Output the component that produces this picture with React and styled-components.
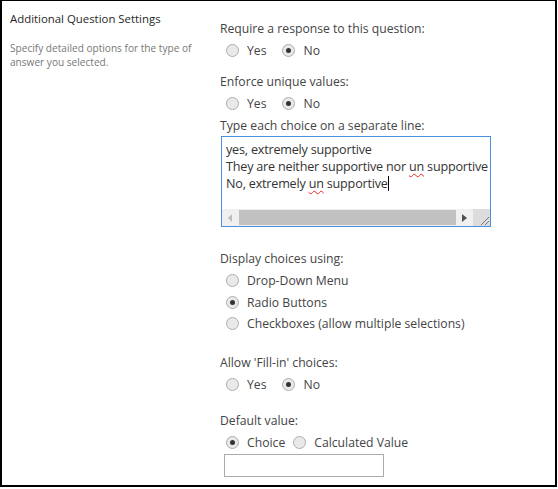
import React from "react";
import styled, { createGlobalStyle } from "styled-components";

const Global = createGlobalStyle`
  html, body { margin: 0; padding: 0; background: #fff; }
  body { font-family: "Open Sans", "Noto Sans", sans-serif; color: #444; }
`;

const Frame = styled.div`
  box-sizing: border-box;
  width: 557px;
  height: 487px;
  border-top: 1px solid #000;
  border-left: 2px solid #000;
  border-right: 2px solid #000;
  border-bottom: 2px solid #000;
  display: grid;
  grid-template-columns: 218px 1fr;
  overflow: hidden;
`;

const Side = styled.div`
  padding: 9px 0 0 8px;
`;

const SideTitle = styled.div`
  font-size: 11.4px;
  color: #262626;
  line-height: 18px;
`;

const SideDesc = styled.div`
  margin-top: 13px;
  font-size: 10.1px;
  color: #777;
  line-height: 14px;
  width: 190px;
`;

const Main = styled.div`
  padding-top: 18px;
  display: flex;
  flex-direction: column;
`;

const Label = styled.div`
  font-size: 12.2px;
  line-height: 20px;
  color: #444;
  margin-top: ${(p) => p.$gap || 0}px;
`;

const Row = styled.div`
  display: flex;
  align-items: center;
  height: ${(p) => p.$h || 23}px;
  margin-top: ${(p) => p.$mt || 0}px;
  padding-left: 6px;
`;

const Option = styled.div`
  display: flex;
  align-items: center;
  font-size: 12.2px;
  color: #444;
  margin-right: ${(p) => p.$mr || 0}px;
`;

const Radio = styled.span`
  box-sizing: border-box;
  width: 13px;
  height: 13px;
  border-radius: 50%;
  border: 1px solid #adadad;
  background: #e9e9e9;
  margin-right: 8px;
  display: inline-flex;
  align-items: center;
  justify-content: center;
  &::after {
    content: "";
    width: 5px;
    height: 5px;
    border-radius: 50%;
    background: ${(p) => (p.$on ? "#333" : "transparent")};
  }
`;

const TextBox = styled.div`
  box-sizing: border-box;
  margin-left: 1px;
  width: 270px;
  height: 91px;
  border: 1px solid #4a90e2;
  display: flex;
  flex-direction: column;
  background: #fff;
`;

const TextLines = styled.div`
  flex: 1;
  padding: 4px 0 0 4px;
  font-size: 12.6px;
  letter-spacing: -0.2px;
  line-height: 17px;
  color: #333;
  white-space: nowrap;
  overflow: hidden;
`;

const Squiggle = styled.span`
  text-decoration: underline wavy #e22;
  text-decoration-thickness: 1px;
  text-underline-offset: 2px;
`;

const Caret = styled.span`
  display: inline-block;
  width: 1px;
  height: 15px;
  background: #000;
  vertical-align: -3px;
`;

const ScrollBar = styled.div`
  height: 17px;
  display: flex;
  background: #f0f0f0;
`;

const ArrowBtn = styled.div`
  width: 17px;
  height: 17px;
  display: flex;
  align-items: center;
  justify-content: center;
`;

const Thumb = styled.div`
  flex: 1;
  margin: 1px 0;
  background: #c1c1c1;
`;

const Corner = styled.div`
  width: 17px;
  height: 17px;
  background: #dcdcdc;
  display: flex;
  align-items: flex-end;
  justify-content: flex-end;
`;

const SmallInput = styled.div`
  box-sizing: border-box;
  width: 160px;
  height: 23px;
  border: 1px solid #ababab;
  margin: 0 0 0 4px;
`;

const YesNo = ({ no }) => (
  <Row>
    <Option $mr={16}>
      <Radio $on={!no} />
      Yes
    </Option>
    <Option>
      <Radio $on={no} />
      No
    </Option>
  </Row>
);

export default function App() {
  return (
    <>
      <Global />
      <Frame>
        <Side>
          <SideTitle>Additional Question Settings</SideTitle>
          <SideDesc>Specify detailed options for the type of answer you selected.</SideDesc>
        </Side>
        <Main>
          <Label>Require a response to this question:</Label>
          <YesNo no />
          <Label $gap={10}>Enforce unique values:</Label>
          <YesNo no />
          <Label $gap={1}>Type each choice on a separate line:</Label>
          <TextBox>
            <TextLines>
              <div>yes, extremely supportive</div>
              <div>
                They are neither supportive nor <Squiggle>un</Squiggle> supportive
              </div>
              <div>
                No, extremely <Squiggle>un</Squiggle> supportive
                <Caret />
              </div>
            </TextLines>
            <ScrollBar>
              <ArrowBtn>
                <svg width="5" height="8" viewBox="0 0 5 8">
                  <path d="M4 0 L0 4 L4 8 Z" fill="#bcbcbc" />
                </svg>
              </ArrowBtn>
              <Thumb />
              <ArrowBtn>
                <svg width="5" height="8" viewBox="0 0 5 8">
                  <path d="M0 0 L5 4 L0 8 Z" fill="#505050" />
                </svg>
              </ArrowBtn>
              <Corner>
                <svg width="12" height="12" viewBox="0 0 12 12">
                  <path d="M11 3 L3 11 M11 7 L7 11" stroke="#777" strokeWidth="1" />
                </svg>
              </Corner>
            </ScrollBar>
          </TextBox>
          <Label $gap={22}>Display choices using:</Label>
          <Row $h={21.5} $mt={1}>
            <Option>
              <Radio />
              Drop-Down Menu
            </Option>
          </Row>
          <Row $h={21.5}>
            <Option>
              <Radio $on />
              Radio Buttons
            </Option>
          </Row>
          <Row $h={21.5}>
            <Option>
              <Radio />
              Checkboxes (allow multiple selections)
            </Option>
          </Row>
          <Label $gap={18}>Allow 'Fill-in' choices:</Label>
          <YesNo no />
          <Label $gap={15}>Default value:</Label>
          <Row>
            <Option $mr={8}>
              <Radio $on />
              Choice
            </Option>
            <Option>
              <Radio />
              Calculated Value
            </Option>
          </Row>
          <SmallInput />
        </Main>
      </Frame>
    </>
  );
}
